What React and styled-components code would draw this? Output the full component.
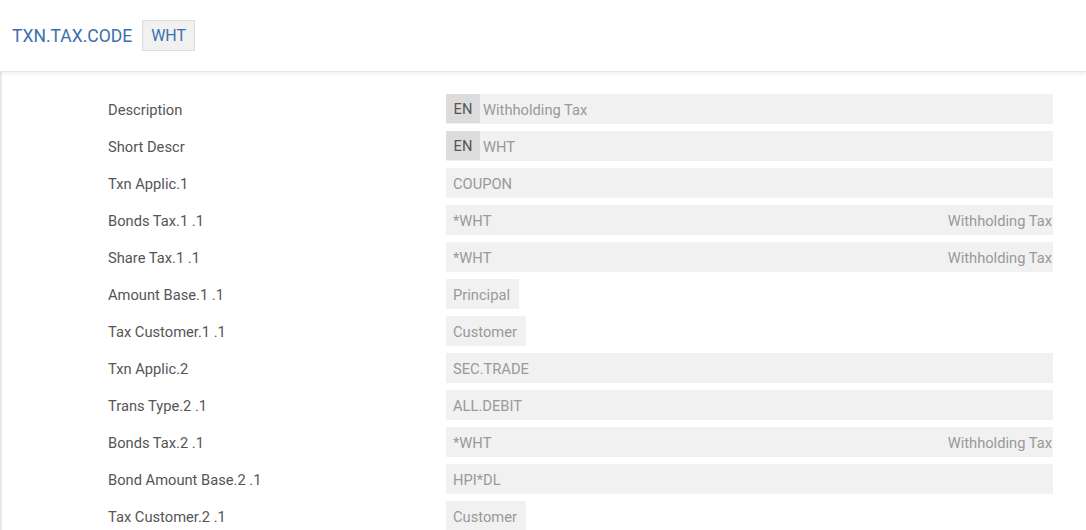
import React from "react";
import styled, { createGlobalStyle } from "styled-components";

const GlobalStyle = createGlobalStyle`
  html, body {
    margin: 0;
    padding: 0;
    background: #fff;
    font-family: Roboto, "Liberation Sans", sans-serif;
  }
`;

const rows = [
  { label: "Description", lang: "EN", value: "Withholding Tax" },
  { label: "Short Descr", lang: "EN", value: "WHT" },
  { label: "Txn Applic.1", value: "COUPON" },
  { label: "Bonds Tax.1 .1", value: "*WHT", extra: "Withholding Tax" },
  { label: "Share Tax.1 .1", value: "*WHT", extra: "Withholding Tax" },
  { label: "Amount Base.1 .1", value: "Principal", short: true },
  { label: "Tax Customer.1 .1", value: "Customer", short: true },
  { label: "Txn Applic.2", value: "SEC.TRADE" },
  { label: "Trans Type.2 .1", value: "ALL.DEBIT" },
  { label: "Bonds Tax.2 .1", value: "*WHT", extra: "Withholding Tax" },
  { label: "Bond Amount Base.2 .1", value: "HPI*DL" },
  { label: "Tax Customer.2 .1", value: "Customer", short: true },
];

const App = () => (
  <Page>
    <GlobalStyle />
    <Header>
      <Title>TXN.TAX.CODE</Title>
      <KeyBox>WHT</KeyBox>
    </Header>
    <Body>
      <Form>
        {rows.map((row) => (
          <React.Fragment key={row.label}>
            <Label>{row.label}</Label>
            <Cell>
              <Field short={row.short}>
                {row.lang && <Lang>{row.lang}</Lang>}
                <Value withLang={!!row.lang}>{row.value}</Value>
                {row.extra && <Extra>{row.extra}</Extra>}
              </Field>
            </Cell>
          </React.Fragment>
        ))}
      </Form>
    </Body>
  </Page>
);

const Page = styled.div`
  width: 1086px;
  height: 530px;
  overflow: hidden;
`;

const Header = styled.header`
  height: 72px;
  display: flex;
  align-items: center;
  padding-left: 12px;
  box-sizing: border-box;
  border-bottom: 1px solid #e6e6e6;
  box-shadow: 0 2px 3px rgba(0, 0, 0, 0.06);
  position: relative;
  z-index: 1;
`;

const Title = styled.span`
  color: #3a70ad;
  font-size: 17.5px;
`;

const KeyBox = styled.span`
  margin-left: 10px;
  height: 31px;
  box-sizing: border-box;
  padding: 0 8px;
  display: flex;
  align-items: center;
  background: #f1f1f1;
  border: 1px solid #dddddd;
  color: #3a70ad;
  font-size: 16px;
`;

const Body = styled.main`
  border-left: 2px solid #e8e8e8;
  height: calc(100% - 72px);
  box-sizing: border-box;
  padding: 22px 0 0 106px;
`;

const Form = styled.div`
  display: grid;
  grid-template-columns: 338px 607px;
  grid-auto-rows: 30px;
  row-gap: 7px;
`;

const Label = styled.div`
  display: flex;
  align-items: center;
  padding-top: 1px;
  color: #555;
  font-size: 14.7px;
`;

const Cell = styled.div`
  display: flex;
`;

const Field = styled.div`
  display: flex;
  align-items: center;
  width: ${(p) => (p.short ? "auto" : "100%")};
  height: 30px;
  padding-top: 1px;
  box-sizing: border-box;
  background: #f1f1f1;
  font-size: 14.7px;
  color: #999;
  padding-right: ${(p) => (p.short ? "9px" : "1px")};
`;

const Lang = styled.span`
  width: 34px;
  height: 29px;
  align-self: flex-start;
  margin-top: -1px;
  display: flex;
  align-items: center;
  justify-content: center;
  background: #dcdcdc;
  color: #555;
`;

const Value = styled.span`
  padding-left: ${(p) => (p.withLang ? "3px" : "7px")};
  flex: 1;
  white-space: nowrap;
`;

const Extra = styled.span`
  white-space: nowrap;
`;

export default App;
